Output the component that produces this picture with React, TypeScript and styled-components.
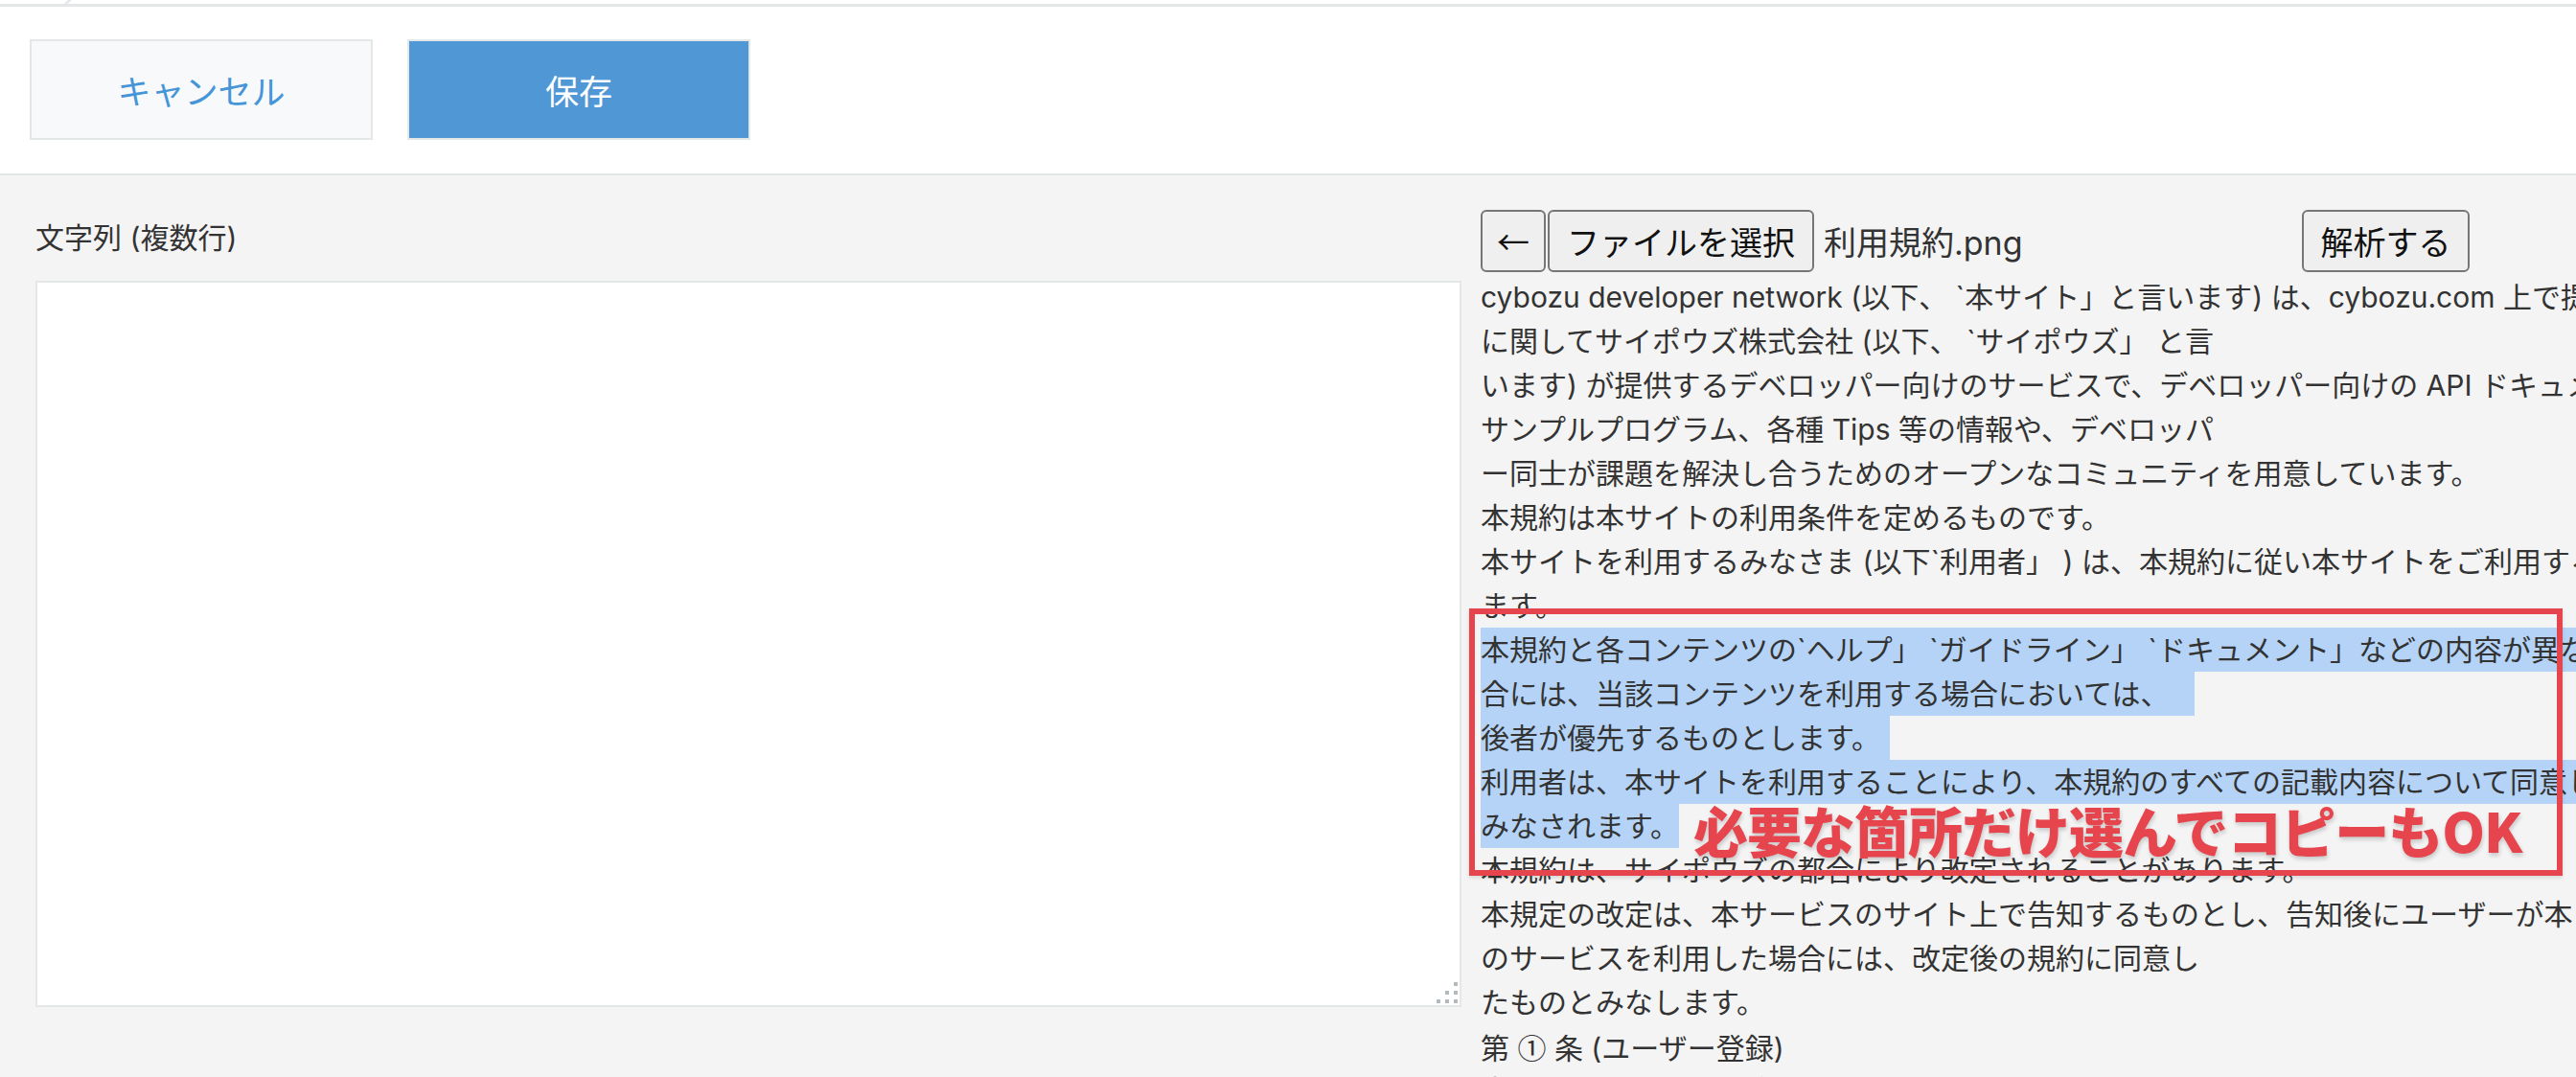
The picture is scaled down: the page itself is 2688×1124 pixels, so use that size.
import type { ReactNode } from "react";
import styled, { createGlobalStyle } from "styled-components";

const GlobalStyle = createGlobalStyle`
  html, body {
    margin: 0;
    padding: 0;
    overflow: hidden;
    background: #f4f4f4;
  }
  body {
    font-family: Inter, "Noto Sans CJK JP", sans-serif;
    color: #333;
  }
`;

const Page = styled.div`
  width: 2688px;
  height: 1124px;
  overflow: hidden;
  display: flex;
  flex-direction: column;
  background: #f4f4f4;
`;

const TopStrip = styled.div`
  position: relative;
  flex: none;
  height: 4px;
  background: #fff;
  border-bottom: 3px solid #e3e7e8;
`;

const TabCorner = styled.svg`
  position: absolute;
  left: 64px;
  top: -2px;
`;

const Header = styled.header`
  flex: none;
  display: flex;
  gap: 36px;
  padding: 34px 31px 35px;
  background: #fff;
  border-bottom: 2px solid #e3e7e8;
`;

const HeaderButton = styled.button<{ $primary?: boolean }>`
  width: 358px;
  height: 105px;
  box-sizing: border-box;
  border: 2px solid #e3e7e8;
  background: ${(p) => (p.$primary ? "#5097d6" : "#f7f9fa")};
  color: ${(p) => (p.$primary ? "#fff" : "#4595d8")};
  font-family: "Noto Sans CJK JP", sans-serif;
  font-size: 35px;
  cursor: pointer;
`;

const Body = styled.main`
  flex: none;
  display: flex;
  gap: 20px;
  padding-left: 37px;
`;

const LeftCol = styled.section`
  flex: none;
  width: 1488px;
  padding-top: 48px;
`;

const FieldLabel = styled.div`
  font-size: 30px;
  line-height: 34px;
  margin-bottom: 28px;
  color: #333;
`;

const AreaWrap = styled.div`
  position: relative;
  width: 1488px;
  height: 758px;

  &::after {
    content: "";
    position: absolute;
    right: 4px;
    bottom: 4px;
    width: 22px;
    height: 22px;
    background:
      linear-gradient(#b3babd, #b3babd) 18px 0 / 4px 4px no-repeat,
      linear-gradient(#b3babd, #b3babd) 9px 9px / 4px 4px no-repeat,
      linear-gradient(#b3babd, #b3babd) 18px 9px / 4px 4px no-repeat,
      linear-gradient(#b3babd, #b3babd) 0 18px / 4px 4px no-repeat,
      linear-gradient(#b3babd, #b3babd) 9px 18px / 4px 4px no-repeat,
      linear-gradient(#b3babd, #b3babd) 18px 18px / 4px 4px no-repeat;
  }
`;

const TextArea = styled.textarea`
  display: block;
  width: 100%;
  height: 100%;
  box-sizing: border-box;
  border: 2px solid #e3e7e8;
  background: #fff;
  resize: none;
  outline: none;
  font-family: inherit;
  font-size: 28px;
`;

const RightCol = styled.section`
  position: relative;
  flex: 1;
  min-width: 0;
  padding-top: 36px;
`;

const ToolRow = styled.div`
  display: flex;
  align-items: center;
  height: 65px;
`;

const NativeButton = styled.button<{ $width: number }>`
  width: ${(p) => p.$width}px;
  height: 65px;
  box-sizing: border-box;
  padding: 0;
  border: 2px solid #767676;
  border-radius: 6px;
  background: #efefef;
  color: #111;
  font-family: "Noto Sans CJK JP", sans-serif;
  font-size: 34px;
  line-height: 1;
`;

const FilePicker = styled.div`
  display: flex;
  align-items: center;
  width: 787px;
  margin-left: 2px;
`;

const FileName = styled.span`
  margin-left: 10px;
  font-size: 34px;
  color: #333;
`;

const Doc = styled.div`
  margin-top: 3px;
  font-family: Inter, "Noto Sans CJK JP", sans-serif;
  font-size: 30px;
  line-height: 46px;
  white-space: nowrap;
  color: #333;
`;

const Line = styled.div`
  height: 46px;
`;

const CjkGlyph = styled.span`
  font-family: "Noto Sans CJK JP", sans-serif;
`;

const Selected = styled.span<{ $pad?: number }>`
  display: inline-block;
  height: 46px;
  padding-right: ${(p) => p.$pad ?? 0}px;
  background: #b4d3f6;
`;

const CalloutBox = styled.div`
  position: absolute;
  left: -12px;
  top: 452px;
  width: 1141px;
  height: 279px;
  box-sizing: border-box;
  border: 6px solid #e6454d;
  box-shadow: 0 2px 4px rgba(0, 0, 0, 0.12);
  pointer-events: none;
`;

const CalloutText = styled.div`
  position: absolute;
  left: 222px;
  top: 650px;
  font-family: "Noto Sans CJK JP", sans-serif;
  font-size: 57px;
  line-height: 64px;
  font-weight: 900;
  letter-spacing: -1px;
  color: #e6454d;
  white-space: nowrap;
  text-shadow: 1px 3px 4px rgba(0, 0, 0, 0.18);
`;

type DocLine = { text: ReactNode; selected?: boolean; pad?: number };

const lines: DocLine[] = [
  { text: "cybozu developer network (以下、 `本サイト」と言います) は、cybozu.com 上で提供されるサービス" },
  { text: "に関してサイポウズ株式会社 (以下、 `サイポウズ」 と言" },
  { text: "います) が提供するデベロッパー向けのサービスで、デベロッパー向けの API ドキュメント、" },
  { text: "サンプルプログラム、各種 Tips 等の情報や、デベロッパ" },
  { text: "ー同士が課題を解決し合うためのオープンなコミュニティを用意しています。" },
  { text: "本規約は本サイトの利用条件を定めるものです。" },
  { text: "本サイトを利用するみなさま (以下`利用者」 ) は、本規約に従い本サイトをご利用するものとし" },
  { text: "ます。" },
  { text: "本規約と各コンテンツの`ヘルプ」 `ガイドライン」 `ドキュメント」などの内容が異なる場", selected: true },
  { text: "合には、当該コンテンツを利用する場合においては、", selected: true, pad: 26 },
  { text: "後者が優先するものとします。", selected: true, pad: 10 },
  { text: "利用者は、本サイトを利用することにより、本規約のすべての記載内容について同意したものと", selected: true },
  { text: "みなされます。", selected: true },
  { text: "本規約は、サイポウズの都合により改定されることがあります。" },
  { text: "本規定の改定は、本サービスのサイト上で告知するものとし、告知後にユーザーが本" },
  { text: "のサービスを利用した場合には、改定後の規約に同意し" },
  { text: "たものとみなします。" },
  {
    text: (
      <>
        第 <CjkGlyph>①</CjkGlyph> 条 (ユーザー登録)
      </>
    ),
  },
  { text: "本サービスの利用を希望する者は、" },
];

export default function App() {
  return (
    <Page>
      <GlobalStyle />
      <TopStrip>
        <TabCorner width="16" height="9" viewBox="0 0 16 9">
          <path d="M3 9 Q6 3 12 0" stroke="#e3e7e8" strokeWidth="2.5" fill="none" />
        </TabCorner>
      </TopStrip>
      <Header>
        <HeaderButton>キャンセル</HeaderButton>
        <HeaderButton $primary>保存</HeaderButton>
      </Header>
      <Body>
        <LeftCol>
          <FieldLabel>文字列 (複数行)</FieldLabel>
          <AreaWrap>
            <TextArea />
          </AreaWrap>
        </LeftCol>
        <RightCol>
          <ToolRow>
            <NativeButton $width={68}>←</NativeButton>
            <FilePicker>
              <NativeButton $width={278}>ファイルを選択</NativeButton>
              <FileName>利用規約.png</FileName>
            </FilePicker>
            <NativeButton $width={175}>解析する</NativeButton>
          </ToolRow>
          <Doc>
            {lines.map((l, i) => (
              <Line key={i}>
                {l.selected ? <Selected $pad={l.pad}>{l.text}</Selected> : l.text}
              </Line>
            ))}
          </Doc>
          <CalloutBox />
          <CalloutText>必要な箇所だけ選んでコピーもOK</CalloutText>
        </RightCol>
      </Body>
    </Page>
  );
}
